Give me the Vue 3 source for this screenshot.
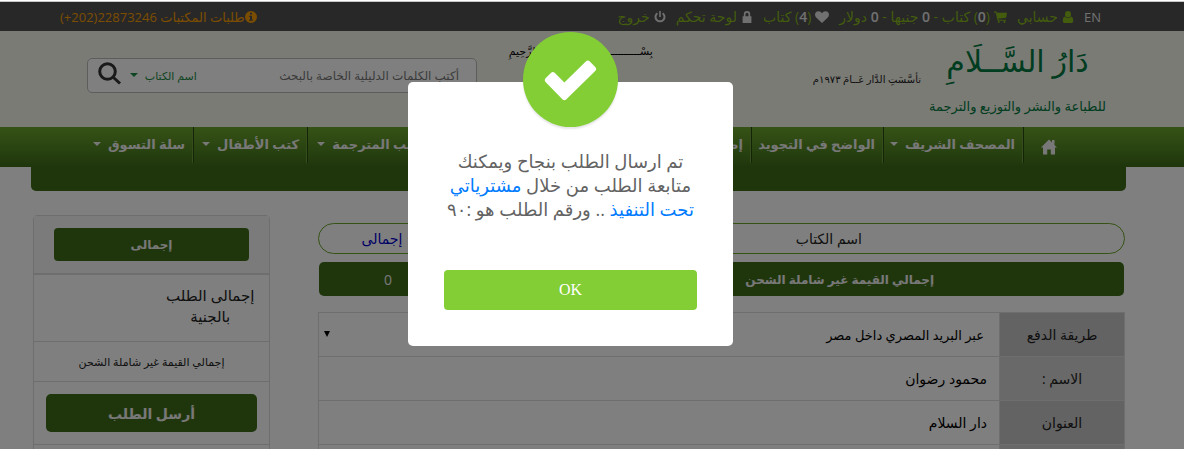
<template>
  <div class="page" dir="rtl">
    <div class="window-edge"></div>

    <div class="topbar">
      <ul class="account-links">
        <li><a href="#" class="light">EN</a></li>
        <li>
          <svg class="icon green" viewBox="0 0 12 12"><path d="M6 0a3 3.200 0 0 1 3 3.200A3 3.200 0 0 1 6 6.400 3 3.200 0 0 1 3 3.200 3 3.200 0 0 1 6 0zM3 5.600c.8 1 1.800 1.500 3 1.500s2.200-.5 3-1.500c1.500.3 2.200 1.700 2.200 4.100 0 1.500-.8 2.300-2 2.300H2.800c-1.200 0-2-.8-2-2.300C.8 7.300 1.500 5.900 3 5.600z" /></svg>
          <a href="#">حسابي</a>
        </li>
        <li>
          <svg class="icon green" viewBox="0 0 13 12"><path d="M0 .5h2.400l.5 1.300H13l-.8 4.900-8 1 .3 1H12v1.100H3.500L1.800 1.700H0zM4.800 10a1 1 0 1 1 0 2 1 1 0 0 1 0-2zm5.700 0a1 1 0 1 1 0 2 1 1 0 0 1 0-2z" /></svg>
          <a href="#">(<b>{{ cart.books }}</b>) كتاب - <b>{{ cart.pounds }}</b> جنيها - <b>{{ cart.dollars }}</b> دولار</a>
        </li>
        <li>
          <svg class="icon" viewBox="0 0 14 12"><path d="M7 12 1.200 6.400C-1 4.200 0 .3 3.500.3 5 .3 6.200 1.100 7 2.200 7.800 1.100 9 .3 10.500.3 14 .3 15 4.200 12.800 6.400z" /></svg>
          <a href="#">(<b>{{ cart.favourites }}</b>) كتاب</a>
        </li>
        <li>
          <svg class="icon" viewBox="0 0 12 12"><path fill-rule="evenodd" d="M2.800 5.300V3.200a3.200 3.200 0 0 1 6.400 0v2.100h1.200V12H1.600V5.300zM4.500 5.300h3V3.200a1.500 1.500 0 0 0-3 0z" /></svg>
          <a href="#">لوحة تحكم</a>
        </li>
        <li>
          <svg class="icon" viewBox="0 0 12 12"><path d="M5.200 0h1.600v6H5.200z" /><path class="stroke" d="M3.400 2.200a4.500 4.500 0 1 0 5.200 0" /></svg>
          <a href="#">خروج</a>
        </li>
      </ul>
      <a href="#" class="hotline">
        <svg class="icon" viewBox="0 0 12 12"><path fill-rule="evenodd" d="M6 0a6 6 0 1 1 0 12A6 6 0 0 1 6 0zM5 1.800v1.700h2V1.800zM4.200 4.700v1.200H5v2.700h-.8v1.200h3.600V8.600H7V4.700z" /></svg>
        <span>طلبات المكتبات <bdi dir="ltr">(+202)22873246</bdi></span>
      </a>
    </div>

    <header class="header">
      <div class="brand">
        <div class="brand-name">دَارُ السَّــلَامِ</div>
        <div class="brand-line">للطباعة والنشر والتوزيع والترجمة</div>
      </div>
      <div class="founded">تأسَّسَتِ الدَّار عَــامَ ١٩٧٣م</div>
      <div class="basmala">بِسْـــــــــــمِ اللهِ الرَّحمنِ الرَّحِيمِ</div>
      <form class="search" @submit.prevent>
        <input v-model="query" type="text" aria-label="بحث" placeholder="أكتب الكلمات الدليلية الخاصة بالبحث">
        <button type="button" class="search-field">اسم الكتاب <i class="caret"></i></button>
        <button type="submit" class="search-go" aria-label="ابحث">
          <svg viewBox="0 0 24 24"><circle cx="9.500" cy="9.500" r="7.800" /><path d="m15.500 15.500 6.500 6" /></svg>
        </button>
      </form>
    </header>

    <nav class="nav">
      <ul>
        <li class="home">
          <a href="#" aria-label="الرئيسية">
            <svg viewBox="0 0 16 16"><path d="M8 .5 11 3.500V1h2.500v5L16 8.500h-2V15.500H9.800V10.500H6.200v5H2V8.500H0z" /></svg>
          </a>
        </li>
        <li v-for="item in menu" :key="item.label">
          <a href="#">{{ item.label }} <i v-if="item.sub" class="caret"></i></a>
        </li>
      </ul>
    </nav>
    <div class="nav-foot"></div>

    <main class="content">
      <section class="order">
        <div class="cart-head">
          <table>
            <thead>
              <tr>
                <th>اسم الكتاب</th>
                <th class="qty"></th>
                <th class="sum">إجمالى</th>
              </tr>
            </thead>
          </table>
        </div>
        <div class="cart-total">
          <span class="cart-total-label">إجمالي القيمة غير شاملة الشحن</span>
          <span class="cart-total-value">{{ total }}</span>
        </div>
        <table class="details">
          <tbody>
            <tr>
              <th><label for="payment">طريقة الدفع</label></th>
              <td class="select-cell">
                <select id="payment" v-model="payment">
                  <option value="post">عبر البريد المصري داخل مصر</option>
                </select>
                <i class="arrow"></i>
              </td>
            </tr>
            <tr v-for="row in details" :key="row.label">
              <th>{{ row.label }}</th>
              <td>{{ row.value }}</td>
            </tr>
          </tbody>
        </table>
      </section>

      <aside class="summary">
        <div class="summary-head"><div class="summary-title">إجمالى</div></div>
        <div class="summary-row"><span>إجمالى الطلب<br>بالجنية</span></div>
        <div class="summary-note">إجمالي القيمة غير شاملة الشحن</div>
        <div class="summary-send"><button type="button">أرسل الطلب</button></div>
        <div class="summary-end"></div>
      </aside>
    </main>

    <div v-if="showModal" class="overlay">
      <div class="modal" role="dialog" aria-modal="true">
        <div class="modal-badge">
          <svg viewBox="0 0 52 40"><path d="M1.500 18 7 12.500q1.500-1.500 3.500 0L20 22 41 1.500q2-2 4 0L50.500 7q1.500 2 0 3.500L22 38.500q-2 2-4 0L1.500 21.500q-1.500-1.500 0-3.500z" /></svg>
        </div>
        <p>
          تم ارسال الطلب بنجاح ويمكنك<br>
          متابعة الطلب من خلال <a href="#">مشترياتي<br>
          تحت التنفيذ</a> .. ورقم الطلب هو :٩٠
        </p>
        <button type="button" @click="showModal = false">OK</button>
      </div>
    </div>
  </div>
</template>

<script setup>
import { ref } from 'vue'

const showModal = ref(true)
const query = ref('')
const payment = ref('post')
const total = ref(0)

const cart = { books: 0, pounds: 0, dollars: 0, favourites: 4 }

const menu = [
  { label: 'المصحف الشريف', sub: true },
  { label: 'الواضح في التجويد', sub: false },
  { label: 'إصدارات الدار', sub: true },
  { label: 'الكتب المترجمة', sub: true },
  { label: 'كتب الأطفال', sub: true },
  { label: 'سلة التسوق', sub: true }
]

const details = [
  { label: 'الاسم :', value: 'محمود رضوان' },
  { label: 'العنوان', value: 'دار السلام' },
  { label: '', value: '' }
]
</script>

<style>
body {
  margin: 0;
  background: #fff;
  overflow: hidden;
}
</style>

<style scoped>
.page {
  height: 100vh;
  overflow: hidden;
  font-family: "Open Sans", "DejaVu Sans", sans-serif;
  font-size: 13px;
  color: #222;
}

* {
  box-sizing: border-box;
}

a {
  color: inherit;
  text-decoration: none;
}

button,
input,
select {
  font-family: inherit;
}

ul {
  list-style: none;
  margin: 0;
  padding: 0;
}

.window-edge {
  height: 2px;
  background: #fff;
  border-bottom: 1px solid #c6c8ca;
}

.caret {
  display: inline-block;
  border: 4px solid transparent;
  border-top-color: currentColor;
  border-bottom: 0;
  vertical-align: 3px;
  margin-right: 4px;
}

/* Top bar */
.topbar {
  display: flex;
  justify-content: space-between;
  align-items: center;
  height: 29px;
  padding: 0 83px 0 60px;
  background: #505050;
  color: #86b81a;
  white-space: nowrap;
}

.account-links {
  display: flex;
  gap: 10px;
  font-size: 14px;
  line-height: 24px;
}

.account-links li {
  display: flex;
  align-items: center;
  gap: 4px;
}

.account-links b,
.light {
  color: #e0e0e0;
}

.account-links b {
  font-weight: 600;
}

.light {
  font-size: 13px;
}

.icon {
  height: 12px;
  fill: #e0e0e0;
}

.icon.green {
  fill: #86b81a;
}

.icon .stroke {
  fill: none;
  stroke: #e0e0e0;
  stroke-width: 2;
}

.hotline {
  display: flex;
  align-items: center;
  color: #f59b00;
}

.hotline .icon {
  fill: #f59b00;
}

/* Header */
.header {
  display: flex;
  align-items: flex-start;
  height: 96px;
  padding: 0 78px 0 87px;
  background: #f6f6ec;
  white-space: nowrap;
}

.brand {
  color: #007a40;
  text-align: center;
}

.brand-name {
  font-size: 30px;
  line-height: 60px;
}

.brand-line {
  font-size: 13px;
  line-height: 30px;
}

.founded {
  margin: 36px 8px 0 0;
  font-size: 10px;
  line-height: 24px;
}

.basmala {
  margin: 8px 160px 0 auto;
  color: #000;
  font-size: 11px;
  line-height: 24px;
}

.search {
  display: flex;
  align-items: center;
  width: 390px;
  height: 35px;
  margin-top: 27px;
  padding: 0 17px 0 8px;
  border: 1px solid #bbb;
  border-radius: 5px;
  background: #fff;
}

.search input {
  flex: 1;
  min-width: 0;
  padding: 0;
  border: 0;
  background: none;
  font-size: 12px;
  outline: 0;
}

.search input::placeholder {
  color: #777;
}

.search button {
  padding: 0;
  border: 0;
  background: none;
}

.search .search-field {
  color: #1d8a45;
  font-size: 11px;
}

.search-go svg {
  display: block;
  width: 28px;
  height: 24px;
  margin: 0 6px 4px 0;
  fill: none;
  stroke: #333;
  stroke-width: 3;
}

/* Navigation */
.nav {
  height: 40px;
  padding: 0 110px 0 83px;
  background: linear-gradient(#6ca62c, #3e6c1a);
}

.nav ul {
  display: grid;
  grid-template-columns: 51fr 140fr 132fr 314fr 130fr 114fr 110fr;
}

.nav li {
  height: 36px;
  padding-right: 8px;
  border-left: 1px solid #26480e;
  color: #f0f0f0;
  font-size: 13px;
  font-weight: bold;
  line-height: 34px;
  white-space: nowrap;
}

.nav li + li {
  box-shadow: inset -1px 0 #6c9c38;
}

.nav li:last-child {
  border-left: 0;
}

.nav .home {
  padding-right: 17px;
}

.home svg {
  display: block;
  width: 16px;
  height: 16px;
  margin-top: 12px;
  fill: #f0f0f0;
}

.nav-foot {
  height: 24px;
  margin: 0 58px 0 31px;
  border-radius: 0 0 5px 5px;
  background: #3e6c1a;
}

/* Content */
.content {
  display: grid;
  grid-template-columns: 807fr 237fr;
  gap: 48px;
  align-items: start;
  margin: 24px 59px 0 33px;
}

.order {
  padding-top: 8px;
}

table {
  width: 100%;
  table-layout: fixed;
  border-collapse: collapse;
}

.cart-head {
  border: 1px solid #6ca62c;
  border-radius: 16px;
}

.cart-head th {
  height: 29px;
  padding: 0;
  font-size: 14px;
  font-weight: normal;
  line-height: 20px;
}

.cart-head .qty {
  width: 11%;
}

.cart-head .sum {
  width: 126px;
  color: #00c;
}

.cart-total {
  display: flex;
  align-items: center;
  height: 34px;
  margin: 8px 1px 16px;
  border-radius: 5px;
  background: #3e6c1a;
  color: #f0f0f0;
}

.cart-total-label {
  flex: 1;
  padding-right: 190px;
  font-size: 12px;
  font-weight: bold;
}

.cart-total-value {
  width: 138px;
  font-size: 14px;
  text-align: center;
}

.details th,
.details td {
  height: 44px;
  padding: 0 12px;
  border: 1px solid #ddd;
  color: #000;
  font-size: 14px;
  line-height: 20px;
  text-align: right;
}

.details th {
  width: 125px;
  background: #d2d2d2;
  color: #222;
  font-weight: normal;
  text-align: center;
}

.details tr:nth-child(odd) th {
  background: #c6c6c6;
}

.details .select-cell {
  position: relative;
  padding: 0;
}

.select-cell select {
  display: block;
  width: 100%;
  height: 42px;
  padding: 0 15px;
  border: 0;
  background: none;
  color: #000;
  font-size: 13px;
  appearance: none;
}

.arrow {
  position: absolute;
  top: 18px;
  left: 5px;
  border: 3px solid transparent;
  border-top: 6px solid #000;
  border-bottom: 0;
}

/* Summary */
.summary {
  border: 1px solid #ddd;
  border-radius: 4px;
}

.summary-head {
  padding: 12px 20px;
  border-bottom: 2px solid #ddd;
  background: #f7f7f7;
}

.summary-title {
  border-radius: 4px;
  background: #3e6c1a;
  color: #f0f0f0;
  font-size: 12px;
  font-weight: bold;
  line-height: 33px;
  text-align: center;
}

.summary-row {
  height: 67px;
  padding-top: 10px;
  border-bottom: 1px solid #ddd;
  font-size: 15px;
  line-height: 21px;
}

.summary-row span {
  display: block;
  width: 50%;
  text-align: center;
}

.summary-note {
  border-bottom: 1px solid #ddd;
  font-size: 11px;
  line-height: 39px;
  text-align: center;
}

.summary-send {
  padding: 12px;
  border-bottom: 1px solid #ddd;
}

.summary-send button {
  display: block;
  width: 100%;
  height: 38px;
  border: 0;
  border-radius: 5px;
  background: #3e6c1a;
  color: #f0f0f0;
  font-size: 14px;
  font-weight: bold;
}

.summary-end {
  height: 40px;
}

/* Modal */
.overlay {
  position: fixed;
  inset: 2px 0 0;
  padding-right: 43px;
  background: rgba(0, 0, 0, 0.5);
}

.modal {
  position: relative;
  width: 325px;
  height: 264px;
  margin: 80px auto 0;
  padding: 67px 36px 36px;
  border-radius: 5px;
  background: #fff;
  text-align: center;
}

.modal-badge {
  position: absolute;
  top: -50px;
  left: 115px;
  width: 95px;
  height: 95px;
  padding: 28px 21px;
  border-radius: 50%;
  background: #82ce34;
  box-shadow: 0 2px 2px rgba(0, 0, 0, 0.1);
}

.modal-badge svg {
  display: block;
  fill: #fff;
}

.modal p {
  margin: 0 0 49px;
  color: #636363;
  font-size: 18px;
  line-height: 24px;
  white-space: nowrap;
}

.modal p a {
  color: #007bff;
}

.modal button {
  width: 100%;
  height: 40px;
  border: 0;
  border-radius: 4px;
  background: #82ce34;
  color: #fff;
  font-family: "Liberation Serif", serif;
  font-size: 16px;
}
</style>
